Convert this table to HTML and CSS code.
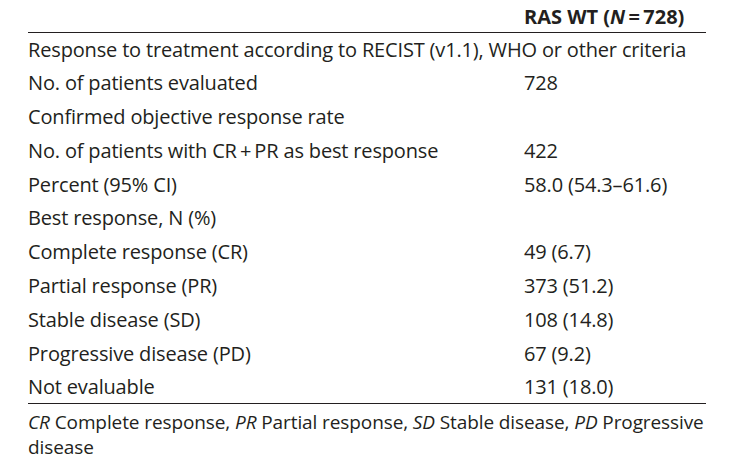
FILE: index.html
```html
<!DOCTYPE html>
<html lang="en">
<head>
<meta charset="utf-8">
<title>Response to treatment</title>
<link rel="stylesheet" href="styles.css">
</head>
<body>
<div class="wrap">
  <table class="resp">
    <thead>
      <tr>
        <th class="label"></th>
        <th class="value">RAS WT (<i>N</i>&#8201;=&#8201;728)</th>
      </tr>
    </thead>
    <tbody>
      <tr><td class="label nowrap" colspan="2">Response to treatment according to RECIST (v1.1), WHO or other criteria</td></tr>
      <tr><td class="label">No. of patients evaluated</td><td class="value">728</td></tr>
      <tr><td class="label">Confirmed objective response rate</td><td class="value"></td></tr>
      <tr><td class="label">No. of patients with CR&#8201;+&#8201;PR as best response</td><td class="value">422</td></tr>
      <tr><td class="label">Percent (95% CI)</td><td class="value">58.0 (54.3–61.6)</td></tr>
      <tr><td class="label">Best response, N (%)</td><td class="value"></td></tr>
      <tr><td class="label">Complete response (CR)</td><td class="value">49 (6.7)</td></tr>
      <tr><td class="label">Partial response (PR)</td><td class="value">373 (51.2)</td></tr>
      <tr><td class="label">Stable disease (SD)</td><td class="value">108 (14.8)</td></tr>
      <tr><td class="label">Progressive disease (PD)</td><td class="value">67 (9.2)</td></tr>
      <tr><td class="label">Not evaluable</td><td class="value">131 (18.0)</td></tr>
    </tbody>
  </table>
  <p class="note"><i>CR</i> Complete response, <i>PR</i> Partial response, <i>SD</i> Stable disease, <i>PD</i> Progressive <span>disease</span></p>
</div>
</body>
</html>
```
FILE: styles.css
```css
html, body {
  margin: 0;
  padding: 0;
  background: #ffffff;
}

body {
  font-family: "Open Sans", "Noto Sans", "Liberation Sans", sans-serif;
  color: #231f20;
}

.wrap {
  width: 678px;
  padding-left: 28px;
}

.resp {
  width: 678px;
  border-collapse: collapse;
  table-layout: fixed;
  font-size: 20px;
  letter-spacing: -0.16px;
}

.resp th,
.resp td {
  padding: 0;
  text-align: left;
  vertical-align: middle;
  font-weight: 400;
}

.resp .label {
  width: 496px;
}

.resp thead tr {
  height: 32px;
  border-bottom: 1px solid #231f20;
}

.resp thead th.value {
  font-weight: 700;
  letter-spacing: 0;
  padding-top: 2px;
}

.resp tbody tr {
  height: 33.8px;
}

.resp tbody tr:last-child {
  border-bottom: 1px solid #231f20;
}

.nowrap {
  white-space: nowrap;
}

.note {
  margin: 0;
  padding-top: 6px;
  font-size: 19px;
  line-height: 25px;
  letter-spacing: -0.1px;
  width: 684px;
}
```
